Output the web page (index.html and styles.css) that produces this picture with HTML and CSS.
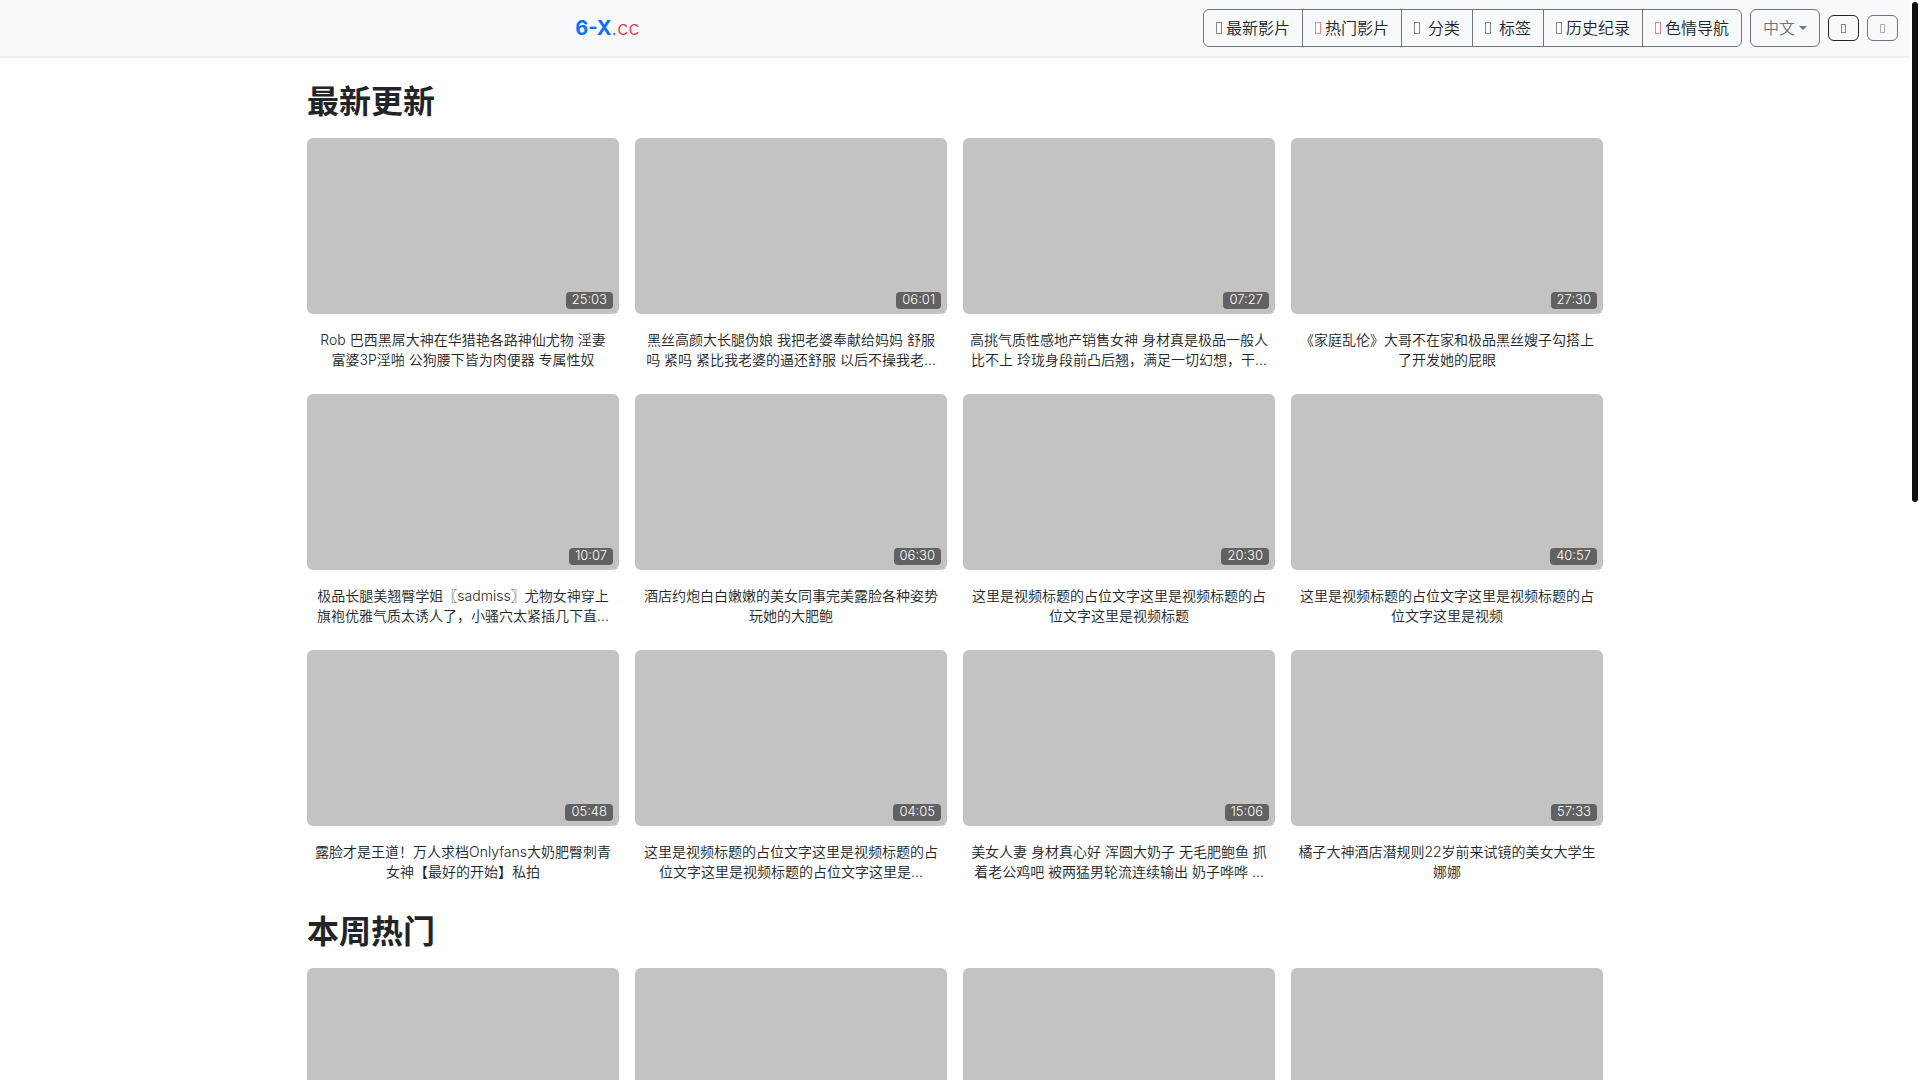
FILE: index.html
```html
<!DOCTYPE html>
<html lang="zh-CN">
<head>
    <meta charset="UTF-8">
    <meta name="viewport" content="width=device-width, initial-scale=1.0">
    <title>6-X.cc</title>
    <link rel="stylesheet" href="styles.css">
</head>
<body>
    <nav class="navbar">
        <a class="brand" href="/"><b>6-X</b>.cc</a>
        <div class="nav-tools">
            <div class="btn-group">
                <a class="btn" href="/new"><span class="icon"></span>最新影片</a>
                <a class="btn" href="/hot"><span class="icon icon-red"></span>热门影片</a>
                <a class="btn" href="/category"><span class="icon icon-wide"></span>分类</a>
                <a class="btn" href="/tags"><span class="icon icon-wide"></span>标签</a>
                <a class="btn" href="/history"><span class="icon"></span>历史纪录</a>
                <a class="btn" href="/sites"><span class="icon icon-red"></span>色情导航</a>
            </div>
            <button type="button" class="btn btn-lang">中文<span class="caret"></span></button>
            <button type="button" class="btn-sm btn-dark" aria-label="主题"><span class="icon-sm"></span></button>
            <button type="button" class="btn-sm" aria-label="搜索"><span class="icon-sm"></span></button>
        </div>
    </nav>

    <main class="container">
        <section>
            <h2>最新更新</h2>
            <div class="video-grid">
                <article class="video">
                    <a class="thumb" href="#"><span class="duration">25:03</span></a>
                    <a class="title" href="#">Rob 巴西黑屌大神在华猎艳各路神仙尤物 淫妻富婆3P淫啪 公狗腰下皆为肉便器 专属性奴</a>
                </article>
                <article class="video">
                    <a class="thumb" href="#"><span class="duration">06:01</span></a>
                    <a class="title" href="#">黑丝高颜大长腿伪娘 我把老婆奉献给妈妈 舒服吗 紧吗 紧比我老婆的逼还舒服 以后不操我老…</a>
                </article>
                <article class="video">
                    <a class="thumb" href="#"><span class="duration">07:27</span></a>
                    <a class="title" href="#">高挑气质性感地产销售女神 身材真是极品一般人比不上 玲珑身段前凸后翘，满足一切幻想，干…</a>
                </article>
                <article class="video">
                    <a class="thumb" href="#"><span class="duration">27:30</span></a>
                    <a class="title" href="#">《家庭乱伦》大哥不在家和极品黑丝嫂子勾搭上了开发她的屁眼</a>
                </article>
                <article class="video">
                    <a class="thumb" href="#"><span class="duration">10:07</span></a>
                    <a class="title" href="#">极品长腿美翘臀学姐〖sadmiss〗尤物女神穿上旗袍优雅气质太诱人了，小骚穴太紧插几下直…</a>
                </article>
                <article class="video">
                    <a class="thumb" href="#"><span class="duration">06:30</span></a>
                    <a class="title" href="#">酒店约炮白白嫩嫩的美女同事完美露脸各种姿势玩她的大肥鲍</a>
                </article>
                <article class="video">
                    <a class="thumb" href="#"><span class="duration">20:30</span></a>
                    <a class="title" href="#">这里是视频标题的占位文字这里是视频标题的占位文字这里是视频标题</a>
                </article>
                <article class="video">
                    <a class="thumb" href="#"><span class="duration">40:57</span></a>
                    <a class="title" href="#">这里是视频标题的占位文字这里是视频标题的占位文字这里是视频</a>
                </article>
                <article class="video">
                    <a class="thumb" href="#"><span class="duration">05:48</span></a>
                    <a class="title" href="#">露脸才是王道！万人求档Onlyfans大奶肥臀刺青女神【最好的开始】私拍</a>
                </article>
                <article class="video">
                    <a class="thumb" href="#"><span class="duration">04:05</span></a>
                    <a class="title" href="#">这里是视频标题的占位文字这里是视频标题的占位文字这里是视频标题的占位文字这里是…</a>
                </article>
                <article class="video">
                    <a class="thumb" href="#"><span class="duration">15:06</span></a>
                    <a class="title" href="#">美女人妻 身材真心好 浑圆大奶子 无毛肥鲍鱼 抓着老公鸡吧 被两猛男轮流连续输出 奶子哗哗 …</a>
                </article>
                <article class="video">
                    <a class="thumb" href="#"><span class="duration">57:33</span></a>
                    <a class="title" href="#">橘子大神酒店潜规则22岁前来试镜的美女大学生娜娜</a>
                </article>
            </div>
        </section>

        <section>
            <h2>本周热门</h2>
            <div class="video-grid">
                <article class="video"><a class="thumb" href="#"></a></article>
                <article class="video"><a class="thumb" href="#"></a></article>
                <article class="video"><a class="thumb" href="#"></a></article>
                <article class="video"><a class="thumb" href="#"></a></article>
            </div>
        </section>
    </main>
    <div class="scroll-thumb"></div>
</body>
</html>
```
FILE: styles.css
```css
:root {
    --blue: #0d6efd;
    --red: #dc3545;
    --gray: #6c757d;
    --dark: #212529;
}

* {
    box-sizing: border-box;
}

html {
    scrollbar-width: none;
}

body {
    margin: 0;
    padding-right: 10px;
    font-family: Inter, "Noto Sans CJK SC", sans-serif;
    font-size: 16px;
    font-weight: 350;
    line-height: 24px;
    color: var(--dark);
    background: #fff;
}

a {
    color: inherit;
    text-decoration: none;
}

/* navbar */
.navbar {
    display: flex;
    align-items: center;
    padding: 9px 12px;
    background: #f8f9fa;
    border-bottom: 2px solid #eee;
}

.brand {
    flex: 1;
    text-align: center;
    font-size: 20px;
    font-weight: 300;
    color: var(--red);
}

.brand b {
    font-weight: 700;
    color: var(--blue);
}

.nav-tools {
    display: flex;
    align-items: center;
    gap: 8px;
}

.btn-group {
    display: flex;
}

.btn {
    display: flex;
    align-items: center;
    height: 38px;
    padding: 0 12px;
    border: 1px solid var(--gray);
    white-space: nowrap;
}

.btn-group .btn + .btn {
    margin-left: -1px;
}

.btn-group .btn:first-child {
    border-radius: 6px 0 0 6px;
}

.btn-group .btn:last-child {
    border-radius: 0 6px 6px 0;
}

.icon {
    width: 6px;
    height: 12px;
    margin-right: 4px;
    border: 1px solid #85888b;
}

.icon-red {
    border-color: #ea8690;
}

.icon-wide {
    margin-right: 8px;
}

.btn-lang {
    border-radius: 6px;
    font: inherit;
    color: var(--gray);
    background: none;
}

.caret {
    margin-left: 4px;
    border: 4px solid transparent;
    border-top-color: var(--gray);
    border-bottom: 0;
}

.btn-sm {
    display: flex;
    align-items: center;
    justify-content: center;
    width: 31px;
    height: 26px;
    padding: 0;
    border: 1px solid var(--gray);
    border-radius: 6px;
    color: #aaafb4;
    background: none;
}

.btn-dark {
    border-color: var(--dark);
    color: #85888b;
}

.icon-sm {
    width: 5px;
    height: 9px;
    border: 1px solid;
}

/* video lists */
.container {
    max-width: 1320px;
    margin: 0 auto;
    padding: 24px 12px;
}

section {
    margin-bottom: 30px;
}

h2 {
    margin: 0 0 16px;
    font-size: 32px;
    line-height: 40px;
    font-weight: 700;
}

.video-grid {
    display: grid;
    grid-template-columns: repeat(4, 1fr);
    gap: 24px 16px;
}

.thumb {
    display: block;
    position: relative;
    aspect-ratio: 39 / 22;
    border-radius: 6px;
    background: #c3c3c3;
}

.duration {
    position: absolute;
    right: 6px;
    bottom: 5px;
    height: 17px;
    padding: 0 6px;
    border-radius: 4px;
    font-size: 13px;
    line-height: 15px;
    color: #fff;
    background: rgba(0, 0, 0, 0.5);
}

.title {
    display: -webkit-box;
    -webkit-box-orient: vertical;
    -webkit-line-clamp: 2;
    overflow: hidden;
    margin: 16px 7px 0;
    font-size: 14px;
    line-height: 20px;
    text-align: center;
}

.scroll-thumb {
    position: fixed;
    top: 2px;
    right: 2px;
    width: 6px;
    height: 500px;
    border-radius: 3px;
    background: #111;
}
```
